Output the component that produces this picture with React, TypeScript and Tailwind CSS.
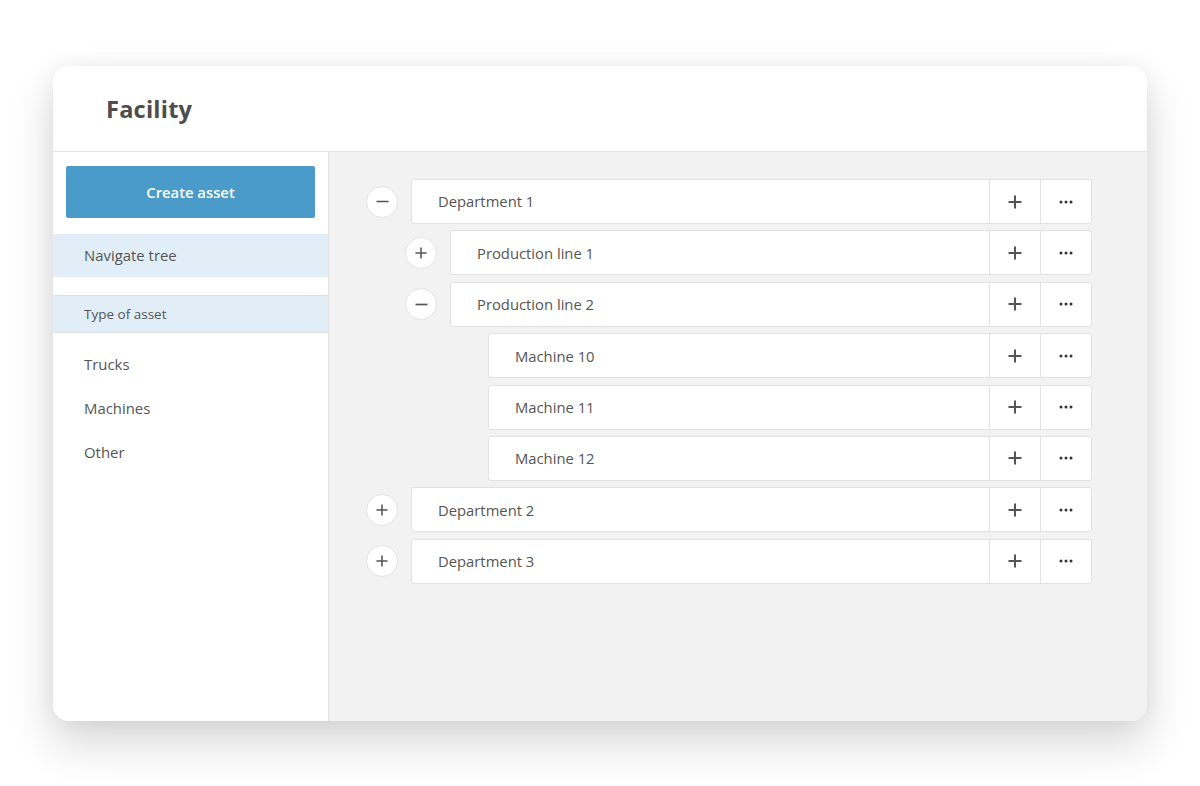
import React from "react";

type Row = { label: string; level: number; toggle?: "plus" | "minus" };

const rows: Row[] = [
  { label: "Department 1", level: 0, toggle: "minus" },
  { label: "Production line 1", level: 1, toggle: "plus" },
  { label: "Production line 2", level: 1, toggle: "minus" },
  { label: "Machine 10", level: 2 },
  { label: "Machine 11", level: 2 },
  { label: "Machine 12", level: 2 },
  { label: "Department 2", level: 0, toggle: "plus" },
  { label: "Department 3", level: 0, toggle: "plus" },
];

function PlusIcon({ size = 14, stroke = 2 }: { size?: number; stroke?: number }) {
  return (
    <svg width={size} height={size} viewBox="0 0 14 14" fill="none">
      <path d="M7 0.5V13.5M0.5 7H13.5" stroke="#555" strokeWidth={stroke} />
    </svg>
  );
}

function MinusIcon() {
  return (
    <svg width="13" height="13" viewBox="0 0 14 14" fill="none">
      <path d="M0.5 7H13.5" stroke="#555" strokeWidth={1.8} />
    </svg>
  );
}

function Dots() {
  return (
    <svg width="14" height="4" viewBox="0 0 14 4">
      <circle cx="2" cy="2" r="1.5" fill="#333" />
      <circle cx="7" cy="2" r="1.5" fill="#333" />
      <circle cx="12" cy="2" r="1.5" fill="#333" />
    </svg>
  );
}

function TreeRow({ row }: { row: Row }) {
  const indent = row.level === 0 ? "pl-0" : row.level === 1 ? "pl-[39px]" : "pl-[77px]";
  return (
    <div className={`flex items-center h-[45px] ${indent}`}>
      <div className="w-[32px] shrink-0 mr-[13px] flex items-center justify-center">
        {row.toggle && (
          <div className="w-[32px] h-[32px] rounded-full bg-white border border-[#e3e3e3] flex items-center justify-center">
            {row.toggle === "plus" ? <PlusIcon size={12} stroke={1.8} /> : <MinusIcon />}
          </div>
        )}
      </div>
      <div className="flex-1 h-full flex bg-white border border-[#e2e2e2] rounded-[3px]">
        <div className="flex-1 flex items-center pl-[26px] text-[14.8px] text-[#555]">{row.label}</div>
        <div className="w-[51px] border-l border-[#e2e2e2] flex items-center justify-center">
          <PlusIcon size={14} stroke={2} />
        </div>
        <div className="w-[51px] border-l border-[#e2e2e2] flex items-center justify-center">
          <Dots />
        </div>
      </div>
    </div>
  );
}

export default function App() {
  return (
    <div
      className="w-[1200px] h-[786px] bg-white pt-[66px] pl-[53px]"
      style={{ fontFamily: '"Open Sans", "Noto Sans", sans-serif' }}
    >
      <div className="w-[1094px] h-[655px] rounded-[16px] bg-white flex flex-col overflow-hidden shadow-[0_22px_45px_rgba(0,0,0,0.16),0_0_20px_rgba(0,0,0,0.05)]">
        <div className="h-[86px] shrink-0 border-b border-[#e4e4e4] flex items-center pl-[53px] pt-[2px]">
          <h1 className="text-[23.6px] font-bold text-[#4d4d4d] tracking-[0.2px]">Facility</h1>
        </div>
        <div className="flex flex-1 min-h-0">
          <aside className="w-[276px] shrink-0 bg-white border-r border-[#e4e4e4] pt-[14px]">
            <div className="px-[13px]">
              <button className="w-full h-[52px] bg-[#4a9bc9] rounded-[2px] text-white font-semibold text-[14.8px]">
                Create asset
              </button>
            </div>
            <div className="mt-[16px] h-[43px] bg-[#e1eef7] flex items-center pl-[31px] text-[14.9px] text-[#555]">
              Navigate tree
            </div>
            <div className="mt-[18px] h-[38px] bg-[#e1eef7] border-y border-[#d7e2ea] flex items-center pl-[31px] text-[13.5px] text-[#555]">
              Type of asset
            </div>
            <div className="mt-[9px] flex flex-col">
              {["Trucks", "Machines", "Other"].map((t) => (
                <div key={t} className="h-[44px] flex items-center pl-[31px] text-[14.9px] text-[#555]">
                  {t}
                </div>
              ))}
            </div>
          </aside>
          <main className="flex-1 bg-[#f2f2f2] pt-[27px] pl-[37px] pr-[55px]">
            <div className="flex flex-col gap-[6.4px]">
              {rows.map((r) => (
                <TreeRow key={r.label} row={r} />
              ))}
            </div>
          </main>
        </div>
      </div>
    </div>
  );
}
